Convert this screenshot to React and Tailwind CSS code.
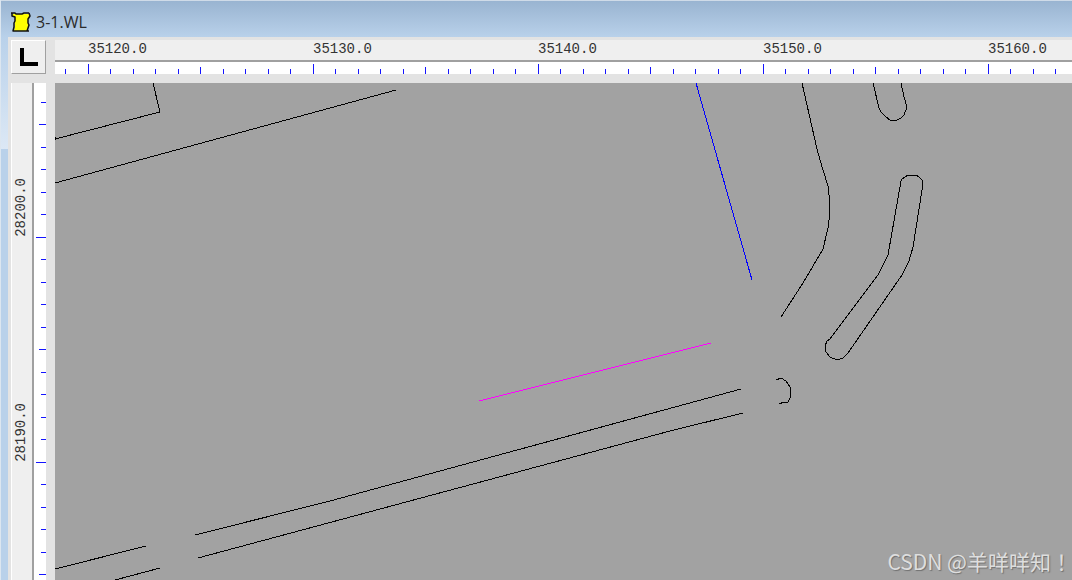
import React from 'react';

const EASTINGS = ['35120.0', '35130.0', '35140.0', '35150.0', '35160.0'];
const NORTHINGS = ['28200.0', '28190.0'];

// ruler ticks come twice per 45px, every tenth one is labelled
const ticks = (start, from, count) =>
  Array.from({ length: count }, (_, i) => {
    const n = i + from;
    const long = n % 10 === 0 ? 10 : n % 5 === 0 ? 7 : 5;
    return { n, at: Math.floor(start + n * 22.5), long };
  });

const LINES = [
  { points: '98,0 105,29 0,56', color: '#000000' },
  { points: '0,54 0,57', color: '#000000' },
  { points: '0,100 341,7', color: '#000000' },
  { points: '641,0 697,197', color: '#0000ff' },
  { points: '424,318 656,260', color: '#ff00ff' },
  { points: '0,486 91,463', color: '#000000' },
  { points: '60,497 105,485', color: '#000000' },
  { points: '140,452 275,418 686,306', color: '#000000' },
  { points: '143,475 615,348 688,330', color: '#000000' },
  { points: '747,0 762,66 768,87 773,103 774,112 774,125 775,130 773,145 768,166 748,200 726,234', color: '#000000' },
  { points: '818,0 824,25 826,29 831,34 835,37 842,37 846,35 849,32 852,24 849,14 846,0', color: '#000000' },
  {
    points: '846,98 847,96 850,94 853,92 861,92 864,94 867,97 868,101 867,107 858,164 854,178 847,192 793,270 788,275 782,277 775,274 771,269 770,263 772,258 775,256 823,192 833,172 846,98',
    color: '#000000',
  },
  { points: '721,297 726,295 731,298 735,304 736,309 735,315 733,319 731,320', color: '#000000' },
  { points: '724,321 729,319 733,319', color: '#000000' },
];

const ScrollIcon = () => (
  <svg className="w-5 h-5 shrink-0" viewBox="0 0 20 20" aria-hidden="true">
    <path d="M2 2h17v3l-2 3v4l1 2-2 5H3l1-4V5H1z" fill="#ffff00" />
    <path
      d="M0 1h4l1 1h6l2-1h5M1 1v3l3 1v4l-1 2v4l-1 4h16M18 1l1 3-2 3v4l1 2-1 3-1 3"
      fill="none"
      stroke="#111111"
      strokeWidth="1.5"
      strokeLinejoin="round"
    />
  </svg>
);

const TopRuler = () => (
  <div className="flex-1 min-w-0 overflow-hidden flex flex-col">
    <div className="h-[22px] shrink-0 bg-[#efefef] border-b-2 border-[#a0a0a0] pl-[33px] flex">
      {EASTINGS.map((label) => (
        <span key={label} className="w-[225px] shrink-0 text-sm leading-[18px]">{label}</span>
      ))}
    </div>
    <svg className="w-full h-3 bg-white" shapeRendering="crispEdges" aria-hidden="true">
      {ticks(33, -1, 90).map((t) => (
        <rect key={t.n} x={t.at} y={12 - t.long} width="1" height={t.long} fill="#1414ff" />
      ))}
    </svg>
  </div>
);

const SideRuler = () => (
  <div className="w-[35px] shrink-0 overflow-hidden flex">
    <div className="w-[23px] shrink-0 bg-[#efefef] border-r-2 border-[#a0a0a0] border-l border-l-white overflow-hidden">
      {NORTHINGS.map((label, i) => (
        <div key={label} className={`flex items-end ${i === 0 ? 'h-[154px]' : 'h-[225px]'}`}>
          <span className="rotate-180 text-sm leading-[18px] [writing-mode:vertical-rl]">{label}</span>
        </div>
      ))}
    </div>
    <svg className="w-3 h-full bg-white" shapeRendering="crispEdges" aria-hidden="true">
      {ticks(154, -6, 60).map((t) => (
        <rect key={t.n} x={12 - t.long} y={t.at} width={t.long} height="1" fill="#1414ff" />
      ))}
    </svg>
  </div>
);

const MapCanvas = () => (
  <main className="relative flex-1 min-w-0 bg-[#a2a2a2] overflow-hidden">
    <svg className="block w-full h-full" role="img" aria-label="Line drawing">
      {LINES.map((line) => (
        <polyline
          key={line.points}
          points={line.points}
          fill="none"
          stroke={line.color}
          strokeWidth="1"
          shapeRendering="crispEdges"
        />
      ))}
    </svg>
    <span className="absolute right-0 bottom-[5px] text-[21px] leading-7 text-[#dedede] whitespace-nowrap [font-family:'Noto_Sans_CJK_TC',sans-serif] [text-shadow:1px_1px_1px_#707070]">
      CSDN @羊咩咩知！
    </span>
  </main>
);

const App = () => {
  return (
    <div className="h-screen overflow-hidden flex flex-col bg-[#b9d1ea] border-l border-[#dce6f0] text-[#333333] [font-family:'Liberation_Mono',monospace]">
      {/* Title bar */}
      <header className="h-[37px] shrink-0 flex items-center gap-[5px] pl-[10px] pt-[5px] border-t border-[#cfdbe8] bg-linear-to-b from-[#99b4d1] to-[#b9d1ea]">
        <ScrollIcon />
        <h1 className="text-base leading-5 text-[#2b2b2b] [font-family:'Open_Sans',sans-serif]">3-1.WL</h1>
      </header>

      <div className="flex-1 min-h-0 flex">
        {/* Window frame */}
        <div className="w-[7px] shrink-0">
          <div className="h-28 bg-linear-to-b from-[#b9d1ea] to-[#dce8f5]" />
        </div>

        <div className="flex-1 min-w-0 bg-[#e3e3e3] pl-[3px] flex flex-col">
          <div className="flex gap-[9px] pt-[3px] pb-[9px]">
            <button
              type="button"
              aria-label="Ruler origin"
              className="w-[35px] h-[34px] shrink-0 bg-[#efefef] border border-t-white border-l-white border-r-[#a0a0a0] border-b-[#a0a0a0] flex items-center justify-center"
            >
              <span className="w-[18px] h-[18px] border-l-4 border-b-4 border-black" />
            </button>
            <TopRuler />
          </div>
          <div className="flex-1 min-h-0 flex gap-[9px]">
            <SideRuler />
            <MapCanvas />
          </div>
        </div>
      </div>
    </div>
  );
};

export default App;
